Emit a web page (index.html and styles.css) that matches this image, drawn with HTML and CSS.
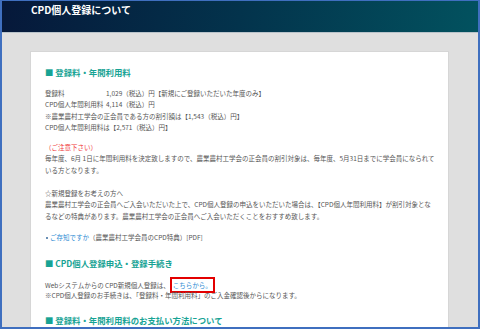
FILE: index.html
```html
<!DOCTYPE html>
<html lang="ja">
<head>
  <meta charset="UTF-8" />
  <title>CPD個人登録について</title>
  <link rel="stylesheet" href="styles.css">
</head>
<body>
  <div class="frame">
    <header class="page-header">
      <h1 class="page-title">CPD個人登録について</h1>
    </header>

    <main class="page-main">
      <div class="content-box">
        <h2 class="sec-title">■ 登録料・年間利用料</h2>
        <div class="fee-list">
          <p><span class="fee-label">登録料</span>1,029（税込）円【新規にご登録いただいた年度のみ】</p>
          <p><span class="fee-label">CPD個人年間利用料</span>4,114（税込）円</p>
          <p>※農業農村工学会の正会員である方の割引額は【1,543（税込）円】</p>
          <p>CPD個人年間利用料は【2,571（税込）円】</p>
        </div>

        <div class="note">
          <p class="caution">（ご注意下さい）</p>
          <p>毎年度、6月 1日に年間利用料を決定致しますので、農業農村工学会の正会員の割引対象は、毎年度、5月31日までに学会員になられている方となります。</p>
        </div>

        <div class="note note-new">
          <p>☆新規登録をお考えの方へ</p>
          <p>農業農村工学会の正会員へご入会いただいた上で、CPD個人登録の申込をいただいた場合は、【CPD個人年間利用料】が割引対象となるなどの特典があります。農業農村工学会の正会員へご入会いただくことをおすすめ致します。</p>
        </div>

        <p class="doc-link"><span class="dot"></span><a href="#">ご存知ですか</a>（農業農村工学会員のCPD特典）[PDF]</p>

        <h2 class="sec-title">■ CPD個人登録申込・登録手続き</h2>
        <div class="apply">
          <p>Webシステムからの CPD新規個人登録は、<a href="#" class="boxed">こちらから。</a></p>
          <p>※CPD個人登録のお手続きは、「登録料・年間利用料」のご入金確認後からになります。</p>
        </div>

        <h2 class="sec-title">■ 登録料・年間利用料のお支払い方法について</h2>
      </div>
    </main>
  </div>
</body>
</html>
```

FILE: styles.css
```css
html, body {
  margin: 0; padding: 0;
  height: 100%;
  font-family: "Noto Sans CJK JP", "Noto Sans", sans-serif;
  color: #555;
}
.frame {
  box-sizing: border-box;
  height: 329px;
  border: 2px solid #3f6fbf;
  border-top-width: 1px;
  background: #dfdfdf;
  overflow: hidden;
  display: flex;
  flex-direction: column;
}
.page-header {
  height: 32px;
  background: linear-gradient(100deg, #06183a 0%, #03334c 50%, #02525f 100%);
  border-bottom: 1px solid #b9c3ca;
  padding: 3px 0 0 29px;
  box-sizing: border-box;
  flex-shrink: 0;
}
.page-title {
  margin: 0;
  font-size: 10px;
  line-height: 12px;
  font-weight: bold;
  color: #fff;
}
.page-main {
  flex: 1;
  padding: 19px 30px 0 29px;
  display: flex;
}
.content-box {
  flex: 1;
  background: #fff;
  box-shadow: 0 0 0 1px #d6d6d6;
  padding: 14px 12px 0 14px;
}
.content-box p {
  margin: 0;
  font-size: 6.5px;
  line-height: 11.3px;
}
.sec-title {
  margin: 0 0 10px 0;
  font-size: 8.4px;
  line-height: 12px;
  font-weight: bold;
  color: #17a394;
}
.fee-label {
  display: inline-block;
  width: 61px;
}
.note {
  margin-top: 9px;
}
.note-new {
  margin-top: 12px;
}
.caution {
  color: #f03a3a;
}
.doc-link {
  margin-top: 10px !important;
  margin-bottom: 14px !important;
}
.dot {
  display: inline-block;
  width: 2px;
  height: 2px;
  background: #6a8fb5;
  margin: 0 2px 1px 1px;
  vertical-align: middle;
}
a {
  color: #2b8ad3;
  text-decoration: none;
}
.apply {
  margin-top: 12px;
  margin-bottom: 12px;
}
.apply p:first-child {
  line-height: 9px;
}
.boxed {
  border: 2px solid #e30000;
  padding: 1px 1px;
}
```
